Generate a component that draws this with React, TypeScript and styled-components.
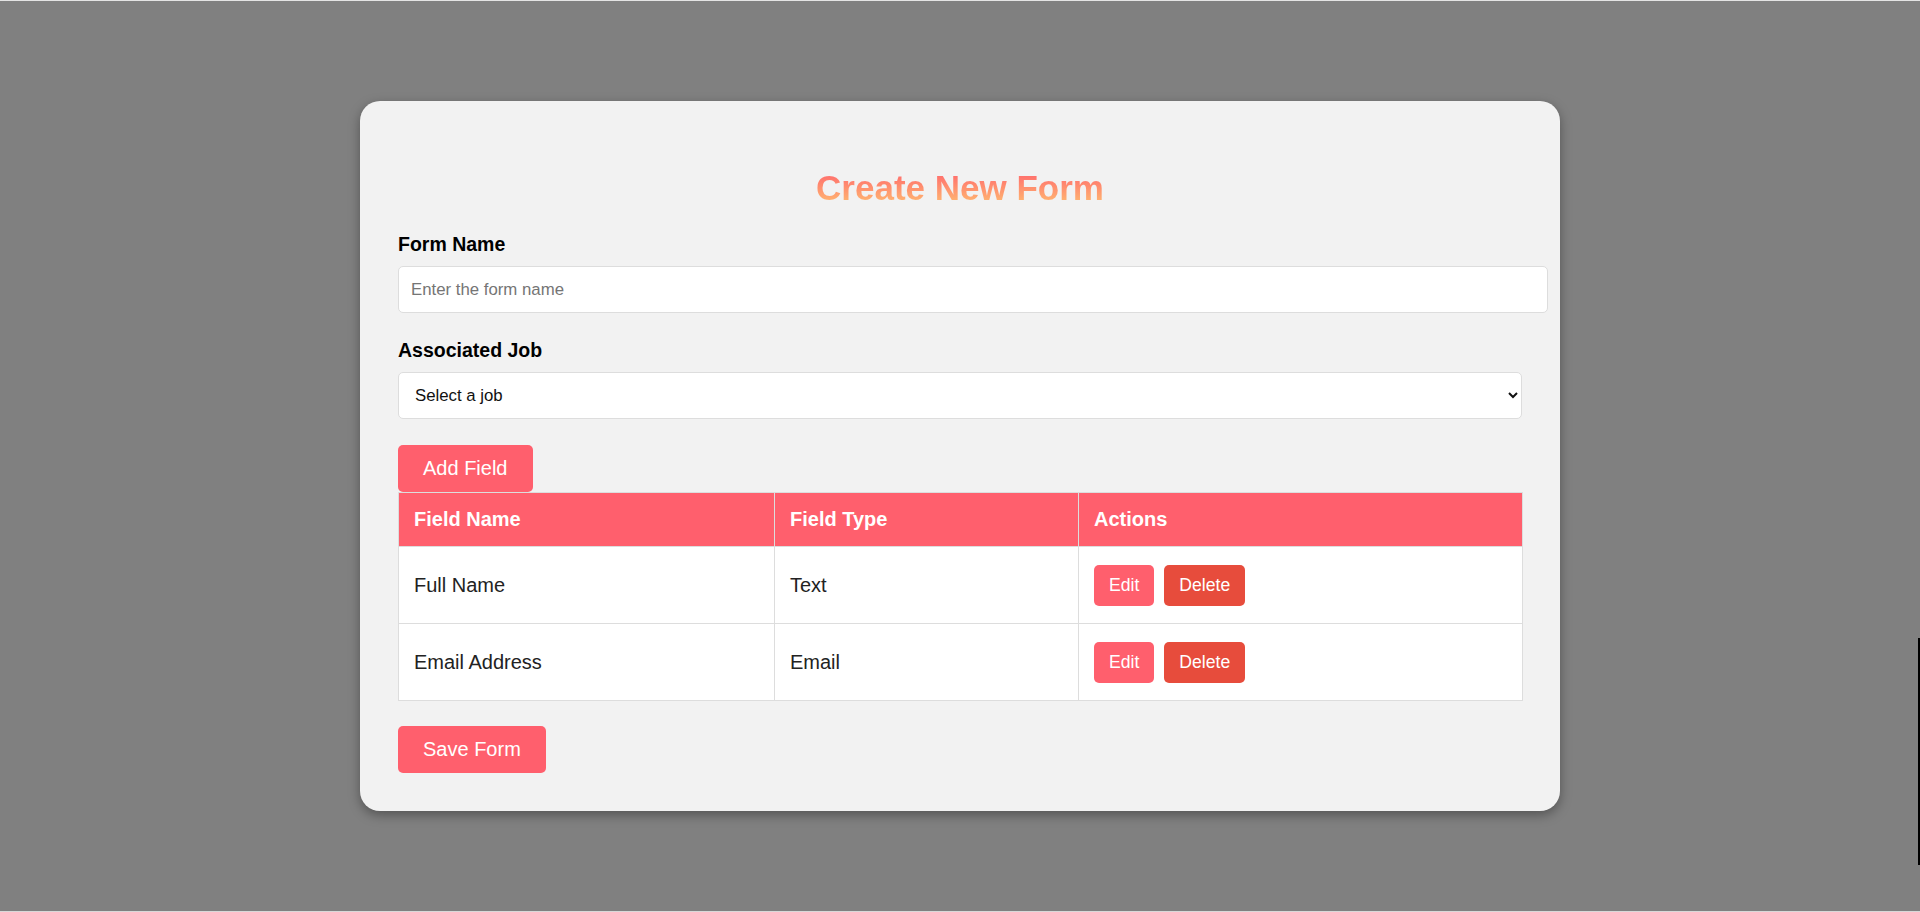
import styled, { createGlobalStyle } from "styled-components";

const GlobalStyle = createGlobalStyle`
  html, body {
    margin: 0;
    padding: 0;
    background: #fff;
  }
  body {
    font-family: "Liberation Sans", Arial, sans-serif;
  }
`;

const fields = [
  { name: "Full Name", type: "Text" },
  { name: "Email Address", type: "Email" },
];

const App = () => {
  return (
    <>
      <GlobalStyle />
      <Overlay>
        <Card>
          <Title>Create New Form</Title>

          <FieldGroup>
            <Label htmlFor="form-name">Form Name</Label>
            <TextInput id="form-name" type="text" placeholder="Enter the form name" />
          </FieldGroup>

          <FieldGroup>
            <Label htmlFor="job">Associated Job</Label>
            <Select id="job" defaultValue="">
              <option value="">Select a job</option>
              <option value="1">Frontend Developer</option>
              <option value="2">Backend Developer</option>
            </Select>
          </FieldGroup>

          <PrimaryButton type="button">Add Field</PrimaryButton>

          <FieldTable>
            <thead>
              <tr>
                <HeadCell $width={376}>Field Name</HeadCell>
                <HeadCell $width={304}>Field Type</HeadCell>
                <HeadCell $width={444}>Actions</HeadCell>
              </tr>
            </thead>
            <tbody>
              {fields.map((field) => (
                <tr key={field.name}>
                  <Cell>{field.name}</Cell>
                  <Cell>{field.type}</Cell>
                  <Cell>
                    <Actions>
                      <ActionButton type="button">Edit</ActionButton>
                      <ActionButton type="button" $danger>
                        Delete
                      </ActionButton>
                    </Actions>
                  </Cell>
                </tr>
              ))}
            </tbody>
          </FieldTable>

          <SaveRow>
            <PrimaryButton type="button">Save Form</PrimaryButton>
          </SaveRow>
        </Card>
        <ScrollEdge />
      </Overlay>
    </>
  );
};

const Overlay = styled.div`
  position: relative;
  box-sizing: border-box;
  height: 100vh;
  background: #808080;
  border-top: 1px solid #e4e4e4;
  border-bottom: 1px solid #d8d8d8;
  display: flex;
  align-items: center;
  justify-content: center;
  overflow: hidden;
`;

const ScrollEdge = styled.div`
  position: absolute;
  right: 0;
  top: 637px;
  width: 2px;
  height: 227px;
  background: #000;
`;

const Card = styled.div`
  width: 1200px;
  box-sizing: border-box;
  padding: 38px;
  background: #f2f2f2;
  border-radius: 20px;
  box-shadow: 0 4px 12px rgba(0, 0, 0, 0.35);
`;

const Title = styled.h2`
  margin: 29px 0 25px;
  text-align: center;
  font-size: 35px;
  line-height: 40px;
  font-weight: bold;
  background: linear-gradient(to bottom, #ff5f6d, #ffc371);
  -webkit-background-clip: text;
  background-clip: text;
  color: transparent;
`;

const FieldGroup = styled.div`
  margin-bottom: 26px;
`;

const Label = styled.label`
  display: block;
  margin-bottom: 11px;
  font-size: 19.5px;
  line-height: 22px;
  font-weight: bold;
  color: #000;
`;

const TextInput = styled.input`
  display: block;
  width: 100%;
  box-sizing: content-box;
  margin: 0;
  padding: 12px;
  height: 21px;
  font-family: "Liberation Sans", Arial, sans-serif;
  font-size: 16.8px;
  color: #222;
  background: #fff;
  border: 1px solid #ddd;
  border-radius: 5px;
  outline: none;

  &::placeholder {
    color: #757575;
  }
`;

const Select = styled.select`
  display: block;
  width: 100%;
  height: 47px;
  box-sizing: border-box;
  margin: 0;
  padding: 0 12px;
  font-family: "Liberation Sans", Arial, sans-serif;
  font-size: 16.8px;
  color: #111;
  background: #fff;
  border: 1px solid #ddd;
  border-radius: 5px;
  outline: none;
`;

const PrimaryButton = styled.button`
  display: block;
  margin: 0;
  padding: 12px 25px;
  font-family: "Liberation Sans", Arial, sans-serif;
  font-size: 20px;
  line-height: 23px;
  color: #fff;
  background: #ff5f6d;
  border: none;
  border-radius: 5px;
  cursor: pointer;
`;

const FieldTable = styled.table`
  width: 100%;
  border-collapse: collapse;
  table-layout: fixed;
  background: #fff;
  font-size: 20px;
`;

const HeadCell = styled.th<{ $width: number }>`
  width: ${({ $width }) => $width}px;
  box-sizing: border-box;
  padding: 15px;
  text-align: left;
  font-weight: bold;
  line-height: 23px;
  color: #fff;
  background: #ff5f6d;
  border: 1px solid #ddd;
`;

const Cell = styled.td`
  padding: 15px;
  height: 46px;
  line-height: 23px;
  color: #222;
  border: 1px solid #ddd;
  vertical-align: middle;
`;

const Actions = styled.div`
  display: flex;
  align-items: center;
  gap: 10px;
`;

const ActionButton = styled.button<{ $danger?: boolean }>`
  margin: 0;
  padding: 10px 15px;
  font-family: "Liberation Sans", Arial, sans-serif;
  font-size: 17.6px;
  line-height: 21px;
  color: #fff;
  background: ${({ $danger }) => ($danger ? "#e74c3c" : "#ff5f6d")};
  border: none;
  border-radius: 5px;
  cursor: pointer;
`;

const SaveRow = styled.div`
  margin-top: 25px;
`;

export default App;
